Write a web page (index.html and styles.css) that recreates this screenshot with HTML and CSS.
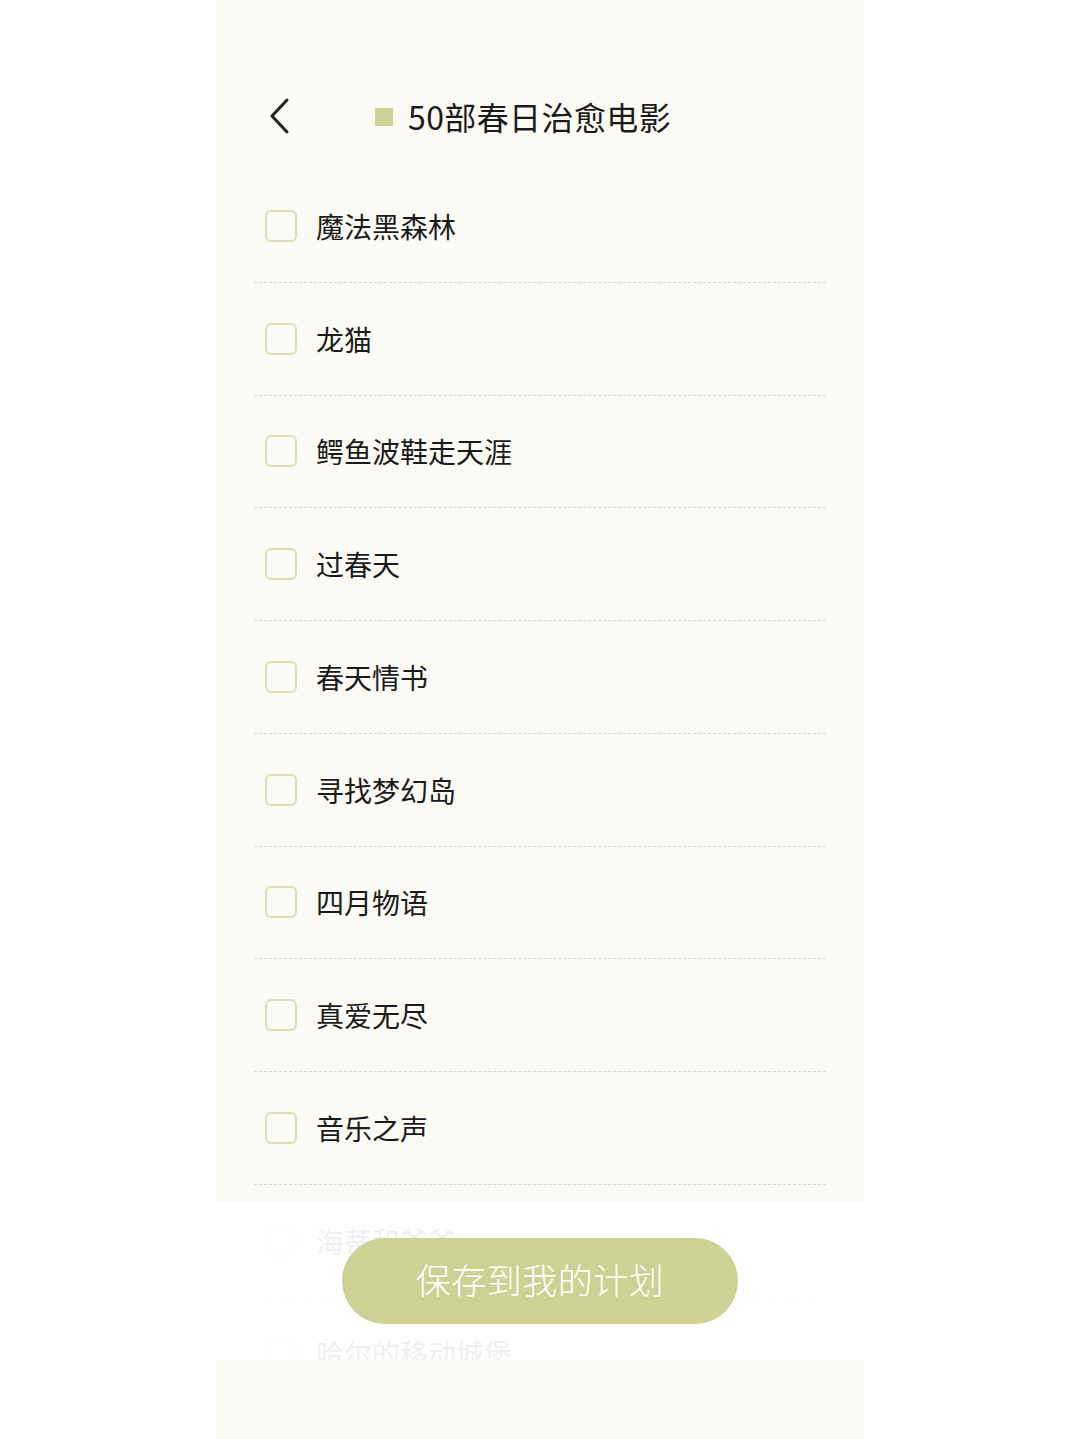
FILE: index.html
```html
<!DOCTYPE html>
<html lang="zh">
<head>
<meta charset="utf-8">
<title>50部春日治愈电影</title>
<link rel="stylesheet" href="styles.css">
</head>
<body>
<div class="panel">
  <header class="header">
    <svg class="back" width="24" height="40" viewBox="0 0 24 40" aria-hidden="true">
      <path d="M19 3 L4 19 L19 35" fill="none" stroke="#222" stroke-width="3" stroke-linecap="round" stroke-linejoin="round"/>
    </svg>
    <span class="mark"></span>
    <h1 class="title">50部春日治愈电影</h1>
  </header>
  <ul class="list">
    <li class="row"><span class="box"></span><span class="name">魔法黑森林</span></li>
    <li class="row"><span class="box"></span><span class="name">龙猫</span></li>
    <li class="row"><span class="box"></span><span class="name">鳄鱼波鞋走天涯</span></li>
    <li class="row"><span class="box"></span><span class="name">过春天</span></li>
    <li class="row"><span class="box"></span><span class="name">春天情书</span></li>
    <li class="row"><span class="box"></span><span class="name">寻找梦幻岛</span></li>
    <li class="row"><span class="box"></span><span class="name">四月物语</span></li>
    <li class="row"><span class="box"></span><span class="name">真爱无尽</span></li>
    <li class="row"><span class="box"></span><span class="name">音乐之声</span></li>
    <li class="row"><span class="box"></span><span class="name">海蒂和爷爷</span></li>
    <li class="row"><span class="box"></span><span class="name">哈尔的移动城堡</span></li>
  </ul>
  <div class="savebar">
    <button class="save">保存到我的计划</button>
  </div>
  <div class="bottom"></div>
</div>
</body>
</html>
```
FILE: styles.css
```css
html, body {
  margin: 0;
  padding: 0;
  background: #ffffff;
}
body {
  font-family: "Noto Sans CJK SC", "Noto Sans", sans-serif;
  color: #1a1a1a;
}
.panel {
  position: relative;
  width: 648px;
  height: 1439px;
  margin: 0 auto;
  background: #fcfaf4;
  overflow: hidden;
}
.header {
  display: flex;
  align-items: center;
  height: 104px;
  padding: 64px 0 2px 52px;
}
.back {
  display: block;
  flex: none;
  margin-top: 2px;
}
.mark {
  width: 18px;
  height: 18px;
  background: #cdd196;
  margin-left: 83px;
  flex: none;
  margin-top: 2px;
}
.title {
  margin: 0 0 0 15px;
  font-size: 32px;
  font-weight: 400;
  letter-spacing: 0.4px;
  line-height: 1;
  color: #1a1a1a;
}
.list {
  list-style: none;
  margin: 0;
  padding: 0 38px;
}
.row {
  display: flex;
  align-items: center;
  height: 111.75px;
  border-bottom: 1px dashed #d8d4ca;
  padding-left: 11px;
}
.box {
  width: 28px;
  height: 28px;
  border: 2px solid #dcdeb5;
  border-radius: 6px;
  flex: none;
}
.name {
  margin-left: 19px;
  font-size: 28px;
  line-height: 1;
}
.savebar {
  position: absolute;
  left: 0;
  right: 0;
  top: 1202px;
  height: 158px;
  background: rgba(255, 255, 255, 0.93);
  display: flex;
  align-items: center;
  justify-content: center;
}
.save {
  width: 396px;
  height: 86px;
  border: none;
  border-radius: 43px;
  background: #cdd193;
  color: #ffffff;
  font-family: "Noto Sans CJK SC", sans-serif;
  font-size: 35px;
  font-weight: 300;
  letter-spacing: 0.5px;
  line-height: 1;
  padding: 0 0 5px 0;
}
.bottom {
  position: absolute;
  left: 0;
  right: 0;
  top: 1360px;
  bottom: 0;
  background: #fcfaf4;
}
```
